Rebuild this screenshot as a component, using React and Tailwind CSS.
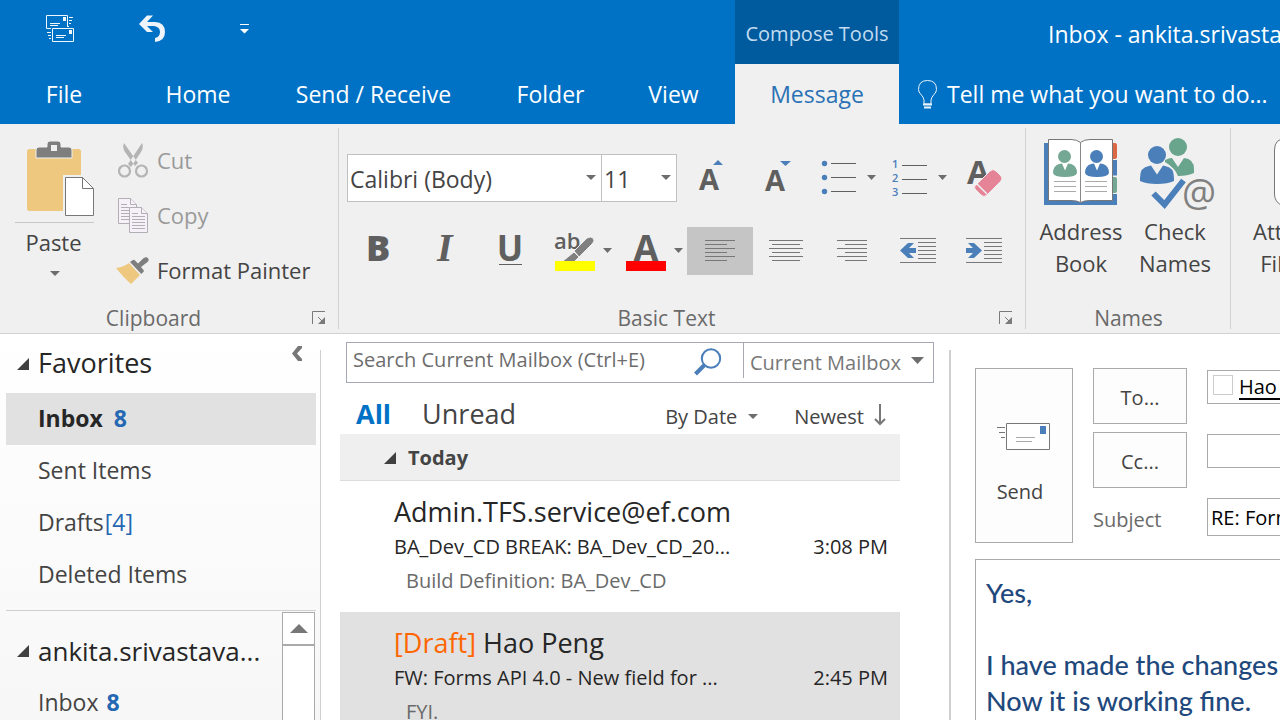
import React from "react";

const TABS = [
  { label: "File", width: "w-32" },
  { label: "Home", width: "w-[140px]" },
  { label: "Send / Receive", width: "w-[211px]" },
  { label: "Folder", width: "w-[143px]" },
  { label: "View", width: "w-[103px]" },
];

const FAVORITES = [
  { label: "Sent Items" },
  { label: "Drafts", count: "[4]" },
  { label: "Deleted Items" },
];

const MESSAGES = [
  {
    sender: "Admin.TFS.service@ef.com",
    subject: "BA_Dev_CD BREAK: BA_Dev_CD_20...",
    time: "3:08 PM",
    preview: "Build Definition: BA_Dev_CD",
  },
  {
    draft: true,
    selected: true,
    sender: "Hao Peng",
    subject: "FW: Forms API 4.0 - New field for ...",
    time: "2:45 PM",
    preview: "FYI.",
  },
];

const GRAY = "#5f5f5f";
const BLUE = "#4a7fba";

function DownArrow({ className = "" }) {
  return (
    <svg className={`pointer-events-none ${className}`} width="10" height="5" viewBox="0 0 10 5" aria-hidden="true">
      <path d="M0 0h10L5 5z" fill="#6d6d6d" />
    </svg>
  );
}

function Expander() {
  return (
    <svg className="shrink-0" width="12" height="12" viewBox="0 0 12 12" aria-hidden="true">
      <path d="M12 0v12H0z" fill="#404040" />
    </svg>
  );
}

function Launcher() {
  return (
    <button type="button" aria-label="More options" className="absolute right-[13px] top-[9px]">
      <svg width="14" height="14" viewBox="0 0 14 14" aria-hidden="true">
        <path d="M.5 13V.5H13M6 6l4 4" fill="none" stroke="#7a7a7a" />
        <path d="M13 6v7H6z" fill="#7a7a7a" />
      </svg>
    </button>
  );
}

function Group({ label, launcher, className = "", children }) {
  return (
    <section className={`relative shrink-0 h-full ${className}`} aria-label={label}>
      <div className="h-[178px]">{children}</div>
      <div className={`relative h-8 flex items-center justify-center text-[21px] leading-8 text-[#6a6a6a] ${launcher ? "pr-8" : ""}`}>
        {label}
        {launcher && <Launcher />}
      </div>
      <div className="absolute right-0 top-1 bottom-1 w-px bg-[#d2d2d2]" />
    </section>
  );
}

function Tool({ label, width, selected, w, children }) {
  return (
    <button
      type="button"
      aria-label={label}
      className={`h-12 shrink-0 ${width} ${selected ? "bg-[#c5c5c5]" : ""}`}
    >
      <svg className="block" width={w} height="48" viewBox={`0 0 ${w} 48`} aria-hidden="true">
        {children}
      </svg>
    </button>
  );
}

function QuickMailIcon() {
  return (
    <svg width="29" height="28" viewBox="0 0 29 28" fill="none" stroke="#f2f7fc" aria-hidden="true">
      <path d="M21.500 12V.5H.5v13H5M4 8.500h10M4 10.500h8M23 2.500h4M23 5.500h3M23 8.500h2M23 11.500h-1" />
      <path d="M6.500 13.500h21v13h-21zM10 20.500h10M10 22.500h8M1 17.500h4M2 20.500h3M3 23.500h2" />
      <path d="M17 2h3v4h-3zM23 15h3v4h-3z" fill="#f2f7fc" stroke="none" />
    </svg>
  );
}

function PasteIcon() {
  return (
    <svg width="68" height="76" viewBox="1 0 68 76" overflow="visible" aria-hidden="true">
      <rect x="2" y="8" width="54" height="62" rx="2.500" fill="#edc87e" />
      <path d="M11 17V9q0-3 3-3h8V3q0-3 3-3h8q3 0 3 3v3h8q3 0 3 3v8z" fill="#7e7e7e" stroke="#f0f0f0" />
      <rect x="26" y="4" width="6" height="6" fill="#f0f0f0" />
      <path d="M39.500 35.500h19l11 11v29h-30z" fill="#f0f0f0" stroke="#f0f0f0" strokeWidth="3" />
      <path d="M40.500 36.500h17l11 11v27h-28z" fill="#fff" stroke="#777" />
      <path d="M57.500 36.500v11h11" fill="none" stroke="#777" />
    </svg>
  );
}

function CutIcon() {
  return (
    <svg width="32" height="36" viewBox="0 0 32 36" fill="none" aria-hidden="true">
      <path d="M6 0q-2 4 1 9l10 14 3-3zM24 0q2 4-1 9L13 24l-3-3z" fill="#b4b4b4" />
      <circle cx="6.500" cy="28" r="5.500" stroke="#b4b4b4" strokeWidth="2.200" />
      <circle cx="23.500" cy="28" r="5.500" stroke="#b4b4b4" strokeWidth="2.200" />
    </svg>
  );
}

function CopyIcon() {
  return (
    <svg width="32" height="36" viewBox="0 0 32 36" fill="#f6f0f8" stroke="#b3adb5" aria-hidden="true">
      <path d="M.5.5h12l6 6v19H.5z" />
      <path d="M12.500.5v6h6M3 6.500h6M3 9.500h8M3 12.500h8M3 15.500h8M3 18.500h8M3 21.500h8" />
      <path d="M11.500 9.500h12l6 6v19h-18z" />
      <path d="M23.500 9.500v6h6M14 15.500h6M14 18.500h13M14 21.500h13M14 24.500h13M14 27.500h13M14 30.500h13" />
    </svg>
  );
}

function PainterIcon() {
  return (
    <svg width="34" height="28" viewBox="0 0 34 28" aria-hidden="true">
      <path d="M0 11q8-1 13-5l11 12-9 9q-7-6-15-16z" fill="#edc87e" />
      <path d="M14 5l3-2q1-.5 2 .5l3 3L28 .800q3-1.500 4 .5 1.500 2-.5 3.700L25 10l2.500 3q.8 1-.2 2l-2 2z" fill="#7e7e7e" />
    </svg>
  );
}

function AddressBookIcon() {
  const person = "M0 34q0-7 6-9l3-.6 3 7 3-7 3 .6q6 2 6 9-1 4-12 4T0 34z";
  return (
    <svg width="74" height="68" viewBox="0 0 74 68" aria-hidden="true">
      <path d="M0 5h73v62H0z" fill={BLUE} />
      <path d="M68 4h6v17h-6zM68 38h6v17h-6z" fill="#f0f0f0" />
      <path d="M68 5h3q2 0 2 2v12q0 2-2 2h-3z" fill="#dd6845" />
      <path d="M68 39h3q2 0 2 2v12q0 2-2 2h-3z" fill="#74a794" />
      <path d="M68 21.500h6M68 38h6M68 55.500h6" stroke="#f0f0f0" />
      <path d="M4.500 1.500H27q6 0 9.500 3 3.500-3 9.500-3h22.500v61H46q-6 0-9.500 2-3.500-2-9.500-2H4.500z" fill="#fff" stroke="#777" />
      <path d="M36.500 4.500v60" stroke="#888" />
      <path d="M10 43.500h22M10 48.500h22M10 53.500h22M41 43.500h22M41 48.500h22M41 53.500h22" stroke="#aaa" />
      <circle cx="20.500" cy="18.500" r="6.500" fill="#74a794" />
      <path d={person} transform="translate(9 1)" fill="#74a794" />
      <circle cx="52.500" cy="18.500" r="6.500" fill={BLUE} />
      <path d={person} transform="translate(41 1)" fill={BLUE} />
    </svg>
  );
}

function CheckNamesIcon() {
  return (
    <svg width="82" height="76" viewBox="-6 0 82 76" aria-hidden="true">
      <circle cx="38" cy="9" r="9" fill="#69a48c" />
      <path d="M25 22q4-2 7-2l6 9 6-9q10 1 10 11v4q-6 3-16 3-3-8-13-14z" fill="#69a48c" />
      <circle cx="17" cy="17" r="9" fill={BLUE} />
      <path d="M0 40q0-11 9-12l2-.5 6 9 6-9 2 .5q9 1 9 12v3q-6 3-17 3T0 43z" fill={BLUE} />
      <path d="M13.500 55.500l11 11 19-24" fill="none" stroke={BLUE} strokeWidth="6" />
      <text x="59" y="69" textAnchor="middle" fontSize="38" fill="#808080" fontFamily="Open Sans, sans-serif">@</text>
    </svg>
  );
}

function SendIcon() {
  return (
    <svg width="54" height="28" viewBox="0 0 54 28" fill="none" aria-hidden="true">
      <path d="M9.500.5h43v26h-43z" fill="#fff" stroke="#777" />
      <path d="M19 14.500h19M19 18.500h16" stroke="#aaa" />
      <path d="M43 3h6v8h-6z" fill={BLUE} />
      <path d="M0 4.500h8M2 9.500h6M4 14.500h4" stroke="#777" />
    </svg>
  );
}

function TitleBar() {
  return (
    <div className="flex h-16">
      <div className="w-[735px] shrink-0 flex items-center pb-1.5 pl-[46px] text-white">
        <button type="button" aria-label="Send/Receive all folders" className="w-[93px]">
          <QuickMailIcon />
        </button>
        <button type="button" aria-label="Undo" className="w-[101px]">
          <svg width="27" height="28" viewBox="0 0 27 28" aria-hidden="true">
            <path d="M0 9L8 .5h6L8 7h8q10 .5 10 10 0 9-10 10v-4q5-1 5-6t-6-6H8l6 6H8z" fill="#eef4fa" />
          </svg>
        </button>
        <button type="button" aria-label="Customize quick access toolbar">
          <svg width="9" height="10" viewBox="0 0 9 10" aria-hidden="true">
            <path d="M0 0h9v1H0zM0 5h9L4.500 9.500z" fill="#fff" />
          </svg>
        </button>
      </div>
      <div className="w-[164px] shrink-0 flex items-center justify-center bg-[#005a9e] pt-1 text-[20px] text-[#c3dcf0]">
        Compose Tools
      </div>
      <h1 className="flex-1 min-w-0 pl-[149px] pt-1 text-[23px] leading-[60px] text-white whitespace-nowrap overflow-hidden">
        Inbox - ankita.srivastava
      </h1>
    </div>
  );
}

function TabRow() {
  return (
    <nav className="flex h-[60px] text-[23px] text-white whitespace-nowrap">
      <div className="w-[735px] shrink-0 flex">
        {TABS.map((t) => (
          <button key={t.label} type="button" className={`${t.width} shrink-0 pt-px text-center`}>
            {t.label}
          </button>
        ))}
      </div>
      <button type="button" className="w-[164px] shrink-0 bg-[#f0f0f0] pt-px text-[#2a72b5]">Message</button>
      <button type="button" className="flex-1 min-w-0 flex items-center gap-[9px] pl-[19px] pt-px overflow-hidden">
        <svg className="shrink-0" width="20" height="29" viewBox="0 0 20 29" fill="none" stroke="#e9f3fb" aria-hidden="true">
          <path d="M6 24v-4Q5.500 17 3 14.500.5 12 .5 9.500q0-9 9-9t9 9q0 2.500-2.500 5T13 20v4z" />
          <path d="M5 24.500h9M6 27.500h7" strokeWidth="2" />
        </svg>
        Tell me what you want to do...
      </button>
    </nav>
  );
}

function ClipboardGroup() {
  return (
    <Group label="Clipboard" launcher className="w-[339px]">
      <div className="flex pl-[15px]">
        <button type="button" className="w-[79px] pt-[17px] flex flex-col items-center text-[22px] leading-8 text-[#444]">
          <span className="self-end"><PasteIcon /></span>
          <span className="mt-[5px] w-full border-t border-[#c6c6c6] pt-[3px] pr-0.5">Paste</span>
          <DownArrow className="mt-[13px]" />
        </button>
        <div className="pl-[22px] pt-[9px] text-[22px] whitespace-nowrap">
          <button type="button" className="flex h-[55px] items-center gap-[7px] pl-0.5 text-[#9a9a9a]"><CutIcon />Cut</button>
          <button type="button" className="flex h-[55px] items-center gap-[7px] pl-0.5 text-[#9a9a9a]"><CopyIcon />Copy</button>
          <button type="button" className="flex h-[55px] items-center gap-[7px] text-[#444]"><PainterIcon />Format Painter</button>
        </div>
      </div>
    </Group>
  );
}

function RibbonSelect({ label, value, width }) {
  return (
    <label className={`relative flex h-12 ${width}`}>
      <select
        aria-label={label}
        defaultValue={value}
        className="w-full appearance-none border border-[#c0c0c0] bg-white pl-0.5 pt-0.5 text-[23px] text-[#444]"
      >
        <option>{value}</option>
      </select>
      <DownArrow className="absolute right-1.5 top-[21px]" />
    </label>
  );
}

const SANS = "Open Sans, sans-serif";

function BasicTextGroup() {
  return (
    <Group label="Basic Text" launcher className="w-[687px]">
      <div className="flex pt-[30px] pl-2">
        <RibbonSelect label="Font" value="Calibri (Body)" width="w-[255px] -mr-px" />
        <RibbonSelect label="Font size" value="11" width="w-[76px]" />
        <Tool label="Grow font" width="w-[67px]" w={67}>
          <text x="22" y="36" fontSize="29" fontWeight="700" fill={GRAY} fontFamily={SANS}>A</text>
          <path d="M36 11l5-5 5 5z" fill={BLUE} />
        </Tool>
        <Tool label="Shrink font" width="w-[67px]" w={67}>
          <text x="21" y="37" fontSize="29" fontWeight="700" fill={GRAY} fontFamily={SANS}>A</text>
          <path d="M36 7h11l-5.500 5z" fill={BLUE} />
        </Tool>
        <Tool label="Bullets" width="w-[71px]" w={71}>
          <g fill={BLUE}>
            <circle cx="13.500" cy="9.500" r="2.700" />
            <circle cx="13.500" cy="23.500" r="2.700" />
            <circle cx="13.500" cy="37.500" r="2.700" />
          </g>
          <path d="M20 9.500h25M20 23.500h25M20 37.500h25" stroke={GRAY} />
          <path d="M56 21h9l-4.500 5z" fill="#6d6d6d" />
        </Tool>
        <Tool label="Numbering" width="w-[71px]" w={71}>
          <g fill={BLUE} fontSize="11" fontWeight="600" fontFamily={SANS}>
            <text x="10" y="14">1</text>
            <text x="10" y="28">2</text>
            <text x="10" y="42">3</text>
          </g>
          <path d="M20 11.500h25M20 25.500h25M20 39.500h25" stroke={GRAY} />
          <path d="M56 21h9l-4.500 5z" fill="#6d6d6d" />
        </Tool>
        <Tool label="Clear formatting" width="w-[66px]" w={66}>
          <text x="14" y="30" fontSize="33" fontWeight="700" fill={GRAY} fontFamily={SANS}>A</text>
          <path d="M24 30l13-13q3-3 6 0l5 5q2 2 0 5L34 41q-3 3-6 0l-6-6q-2-2 2-5z" fill="#e58497" stroke="#f0f0f0" />
          <path d="M24 30l10 10" stroke="#f0f0f0" strokeWidth="1.500" />
        </Tool>
      </div>
      <div className="flex pt-[25px] pl-1.5">
        <Tool label="Bold" width="w-[66px]" w={66}>
          <text x="21" y="34" fontSize="36" fontWeight="800" fill={GRAY} fontFamily={SANS}>B</text>
        </Tool>
        <Tool label="Italic" width="w-[66px]" w={66}>
          <text x="26" y="34" fontSize="40" fontWeight="700" fontStyle="italic" fill={GRAY} fontFamily="Liberation Serif, serif">I</text>
        </Tool>
        <Tool label="Underline" width="w-[66px]" w={66}>
          <text x="33" y="34" textAnchor="middle" fontSize="35" fontWeight="700" fill={GRAY} fontFamily={SANS}>U</text>
          <path d="M22 37.500h23" stroke={GRAY} />
        </Tool>
        <Tool label="Highlight color" width="w-[72px]" w={72}>
          <text x="11" y="22" fontSize="22" fontWeight="600" fill={GRAY} fontFamily={SANS}>ab</text>
          <path d="M31 24l13-13q4-2 6 0t0 5L36 30z" fill="#808080" stroke="#f0f0f0" />
          <path d="M31 25l5 5-5 5H20v-1z" fill="#808080" stroke="#f0f0f0" />
          <path d="M12 34h40v10H12z" fill="#ffff00" />
          <path d="M60 21h9l-4.500 5z" fill="#6d6d6d" />
        </Tool>
        <Tool label="Font color" width="w-[72px]" w={72}>
          <text x="31" y="34" textAnchor="middle" fontSize="36" fontWeight="700" fill={GRAY} fontFamily={SANS}>A</text>
          <path d="M11 34h40v10H11z" fill="#ff0000" />
          <path d="M59 21h9l-4.500 5z" fill="#6d6d6d" />
        </Tool>
        <Tool label="Align left" selected width="w-[66px]" w={66}>
          <path d="M18 13.500h30M18 17.500h22M18 21.500h30M18 25.500h22M18 29.500h30M18 33.500h22" stroke="#777" />
        </Tool>
        <Tool label="Align center" width="w-[66px]" w={66}>
          <path d="M16 13.500h34M19 17.500h28M16 21.500h34M19 25.500h28M16 29.500h34M19 33.500h28" stroke="#777" />
        </Tool>
        <Tool label="Align right" width="w-[66px]" w={66}>
          <path d="M18 13.500h30M26 17.500h22M18 21.500h30M26 25.500h22M18 29.500h30M26 33.500h22" stroke="#777" />
        </Tool>
        <Tool label="Decrease indent" width="w-[66px]" w={66}>
          <path d="M15 11.500h36M33 15.500h18M33 19.500h18M33 23.500h18M33 27.500h18M33 31.500h18M15 35.500h36" stroke="#777" />
          <path d="M15 23.500l8-7.500h6l-5 5h7v5h-7l5 5h-6z" fill={BLUE} />
        </Tool>
        <Tool label="Increase indent" width="w-[66px]" w={66}>
          <path d="M15 11.500h36M33 15.500h18M33 19.500h18M33 23.500h18M33 27.500h18M33 31.500h18M15 35.500h36" stroke="#777" />
          <path d="M31 23.500L23 16h-6l5 5h-7v5h7l-5 5h6z" fill={BLUE} />
        </Tool>
      </div>
    </Group>
  );
}

function BigButton({ icon, top, bottom }) {
  return (
    <button type="button" className="w-[94px] shrink-0 pt-3.5 flex flex-col items-center text-[22px] leading-8 text-[#444] whitespace-nowrap">
      <span className="h-[77px]">{icon}</span>
      <span>{top}</span>
      <span>{bottom}</span>
    </button>
  );
}

function Ribbon() {
  return (
    <div className="flex h-[210px] shrink-0 overflow-hidden border-b border-[#d2d2d2] bg-[#f0f0f0]">
      <ClipboardGroup />
      <BasicTextGroup />
      <Group label="Names" className="w-[205px]">
        <div className="flex px-2">
          <BigButton icon={<AddressBookIcon />} top="Address" bottom="Book" />
          <BigButton icon={<CheckNamesIcon />} top="Check" bottom="Names" />
        </div>
      </Group>
      <div className="flex pl-2">
        <BigButton
          icon={
            <svg width="24" height="70" viewBox="0 0 24 70" fill="none" stroke="#777" aria-hidden="true">
              <path d="M8 67.500Q.5 64 .5 56V12Q.5.5 12 .5T23.500 12v44q0 12-11.500 12-3 0-4-.5z" fill="#fff" />
            </svg>
          }
          top="Attach"
          bottom="File ▾"
        />
      </div>
    </div>
  );
}

function FolderPane() {
  return (
    <aside className="relative w-[321px] shrink-0 bg-linear-to-b from-white to-[#f7f7f7] text-[23px] text-[#444]">
      <div className="absolute right-0 top-4 bottom-0 w-px bg-[#d0d0d0]" />
      <div className="flex h-[59px] items-center pl-[17px] gap-[9px]">
        <Expander />
        <h2 className="text-[27px] text-[#262626]">Favorites</h2>
        <button type="button" aria-label="Collapse folder pane" className="ml-auto mr-[18px] mb-5">
          <svg width="11" height="15" viewBox="0 0 11 15" aria-hidden="true">
            <path d="M0 7.500L6 0h4v2L5 7.500 10 13v2H6z" fill="#777" />
          </svg>
        </button>
      </div>
      <ul className="ml-1.5 mr-[5px] border-b border-[#d0d0d0] pb-[9px]">
        <li>
          <a href="#inbox" className="flex h-13 items-center gap-[11px] bg-[#e1e1e1] pb-0.5 pl-8 font-bold text-[#262626]">
            Inbox <span className="text-[#2467b2]">8</span>
          </a>
        </li>
        {FAVORITES.map((f) => (
          <li key={f.label}>
            <a href="#folder" className="flex h-13 items-center gap-px pb-0.5 pl-8">
              {f.label}
              {f.count && <span className="text-[#2467b2]">{f.count}</span>}
            </a>
          </li>
        ))}
      </ul>
      <div className="flex">
        <div className="flex-1 min-w-0">
          <div className="flex h-20 items-center pl-[17px] gap-[9px]">
            <Expander />
            <h2 className="text-[26px] text-[#262626] whitespace-nowrap">ankita.srivastava...</h2>
          </div>
          <a href="#account-inbox" className="flex h-6 items-center gap-2 pb-0.5 pl-[38px]">
            Inbox <span className="font-bold text-[#2467b2]">8</span>
          </a>
        </div>
        <div className="mr-1.5 mt-px h-[130px] w-[33px] shrink-0 border border-[#aaa] bg-white">
          <button type="button" aria-label="Scroll up" className="flex h-[33px] w-full items-center justify-center border-b-2 border-[#aaa]">
            <svg width="18" height="9" viewBox="0 0 18 9" aria-hidden="true">
              <path d="M0 9l9-9 9 9z" fill="#777" />
            </svg>
          </button>
        </div>
      </div>
    </aside>
  );
}

function MessageItem({ m }) {
  return (
    <li className={`h-[131px] pl-[54px] pr-3 pt-3 whitespace-nowrap ${m.selected ? "bg-[#e1e1e1]" : ""}`}>
      <div className="text-[27px] leading-[38px] text-[#262626]">
        {m.draft && <span className="text-[#ff6600]">[Draft] </span>}
        {m.sender}
      </div>
      <div className="flex justify-between text-[20px] leading-8 text-[#262626]">
        <span>{m.subject}</span>
        <span>{m.time}</span>
      </div>
      <div className="pl-3 text-[20px] leading-9 text-[#6a6a6a]">{m.preview}</div>
    </li>
  );
}

function MessageList() {
  return (
    <main className="w-[629px] shrink-0 pl-[19px]">
      <div className="mt-2 ml-1.5 mr-4 flex h-[41px] border border-[#a6a9b4] text-[20px] text-[#777]">
        <input
          aria-label="Search"
          placeholder="Search Current Mailbox (Ctrl+E)"
          className="flex-1 min-w-0 pl-1.5 pb-1.5 placeholder:text-[#6d6d6d]"
        />
        <button type="button" aria-label="Search" className="w-[49px] shrink-0 pb-0.5">
          <svg width="28" height="28" viewBox="0 0 28 28" fill="none" stroke={BLUE} aria-hidden="true">
            <circle cx="17" cy="10.500" r="9.200" strokeWidth="2" />
            <path d="M10.500 17L1.500 26" strokeWidth="4" />
          </svg>
        </button>
        <label className="relative mb-1 w-[190px] shrink-0 border-l border-[#a6a9b4]">
          <select aria-label="Search scope" defaultValue="Current Mailbox" className="h-full w-full appearance-none pl-1.5 pt-1">
            <option>Current Mailbox</option>
          </select>
          <svg className="pointer-events-none absolute right-[9px] top-3.5" width="13" height="7" viewBox="0 0 13 7" aria-hidden="true">
            <path d="M0 0h13L6.500 7z" fill="#6d6d6d" />
          </svg>
        </label>
      </div>
      <div className="flex h-[51px] items-center pl-4 pt-3 text-[27px] text-[#444]">
        <button type="button" className="font-bold text-[#0072c6]">All</button>
        <button type="button" className="ml-[31px]">Unread</button>
        <div className="ml-auto mr-16 flex items-center text-[20px]">
          <button type="button" className="flex items-center gap-[11px] pt-1">By Date <DownArrow /></button>
          <button type="button" className="ml-9 flex items-center gap-2.5 pt-1">
            Newest
            <svg className="mb-1" width="12" height="22" viewBox="0 0 12 22" fill="none" stroke="#777" aria-hidden="true">
              <path d="M6 0v20M1 15l5 5 5-5" strokeWidth="2" />
            </svg>
          </button>
        </div>
      </div>
      <div className="mr-[50px]">
        <h3 className="flex h-[47px] items-center gap-3 border-b border-[#dcdcdc] bg-[#efefef] pl-11 pt-0.5 text-[20px] font-bold text-[#444]">
          <Expander /> Today
        </h3>
        <ul>
          {MESSAGES.map((m) => <MessageItem key={m.sender} m={m} />)}
        </ul>
      </div>
    </main>
  );
}

function Compose() {
  const fieldButton = "flex h-14 w-[94px] items-center justify-center border border-[#aaa] bg-[#fdfdfd] pt-1 text-[20px] text-[#444]";
  return (
    <section className="flex flex-1 min-w-0 flex-col pl-6 pt-[34px]">
      <div className="flex shrink-0 gap-5">
        <button type="button" className="flex h-[175px] w-[98px] shrink-0 flex-col items-center border border-[#aaa] bg-[#fdfdfd] pt-[54px] text-[20px] text-[#444]">
          <SendIcon />
          <span className="mt-[26px] mr-2">Send</span>
        </button>
        <div className="flex flex-1 min-w-0 flex-col gap-2 text-[20px] text-black">
          <div className="flex items-start gap-5">
            <button type="button" className={`${fieldButton} shrink-0`}>To...</button>
            <div className="mt-0.5 flex h-[34px] flex-1 min-w-0 items-center gap-1.5 overflow-hidden border border-r-0 border-[#aaa] pl-[5px] whitespace-nowrap">
              <input type="checkbox" aria-label="Recipient presence" className="mb-1 size-5 shrink-0 appearance-none border border-[#ccc]" />
              <a href="#recipient" className="underline underline-offset-4">Hao Peng</a>
            </div>
          </div>
          <div className="flex items-start gap-5">
            <button type="button" className={`${fieldButton} shrink-0`}>Cc...</button>
            <input aria-label="Cc" className="mt-0.5 h-[34px] flex-1 min-w-0 border border-r-0 border-[#aaa]" />
          </div>
          <div className="flex items-start gap-5">
            <label htmlFor="subject" className="w-[94px] shrink-0 pt-2 leading-8 text-[#6a6a6a]">Subject</label>
            <input id="subject" defaultValue="RE: Forms API 4.0" className="mt-0.5 h-[38px] flex-1 min-w-0 border border-r-0 border-[#aaa] pl-[3px]" />
          </div>
        </div>
      </div>
      <textarea
        aria-label="Message body"
        wrap="off"
        defaultValue={"Yes,\n\nI have made the changes\nNow it is working fine."}
        className="mt-4 flex-1 min-h-0 resize-none overflow-hidden border border-r-0 border-b-0 border-[#aaa] pl-2.5 pt-[15px] font-['Lato',sans-serif] text-[27px] leading-9 font-medium text-[#1f497d]"
      />
    </section>
  );
}

export default function App() {
  return (
    <div className="flex h-screen flex-col overflow-hidden bg-white font-['Open_Sans',sans-serif]">
      <header className="shrink-0 bg-[#0072c6]">
        <TitleBar />
        <TabRow />
      </header>
      <Ribbon />
      <div className="flex flex-1 min-h-0 overflow-hidden">
        <FolderPane />
        <MessageList />
        <div className="mt-4 w-0.5 shrink-0 bg-[#d0d0d0] -ml-px" />
        <Compose />
      </div>
    </div>
  );
}
